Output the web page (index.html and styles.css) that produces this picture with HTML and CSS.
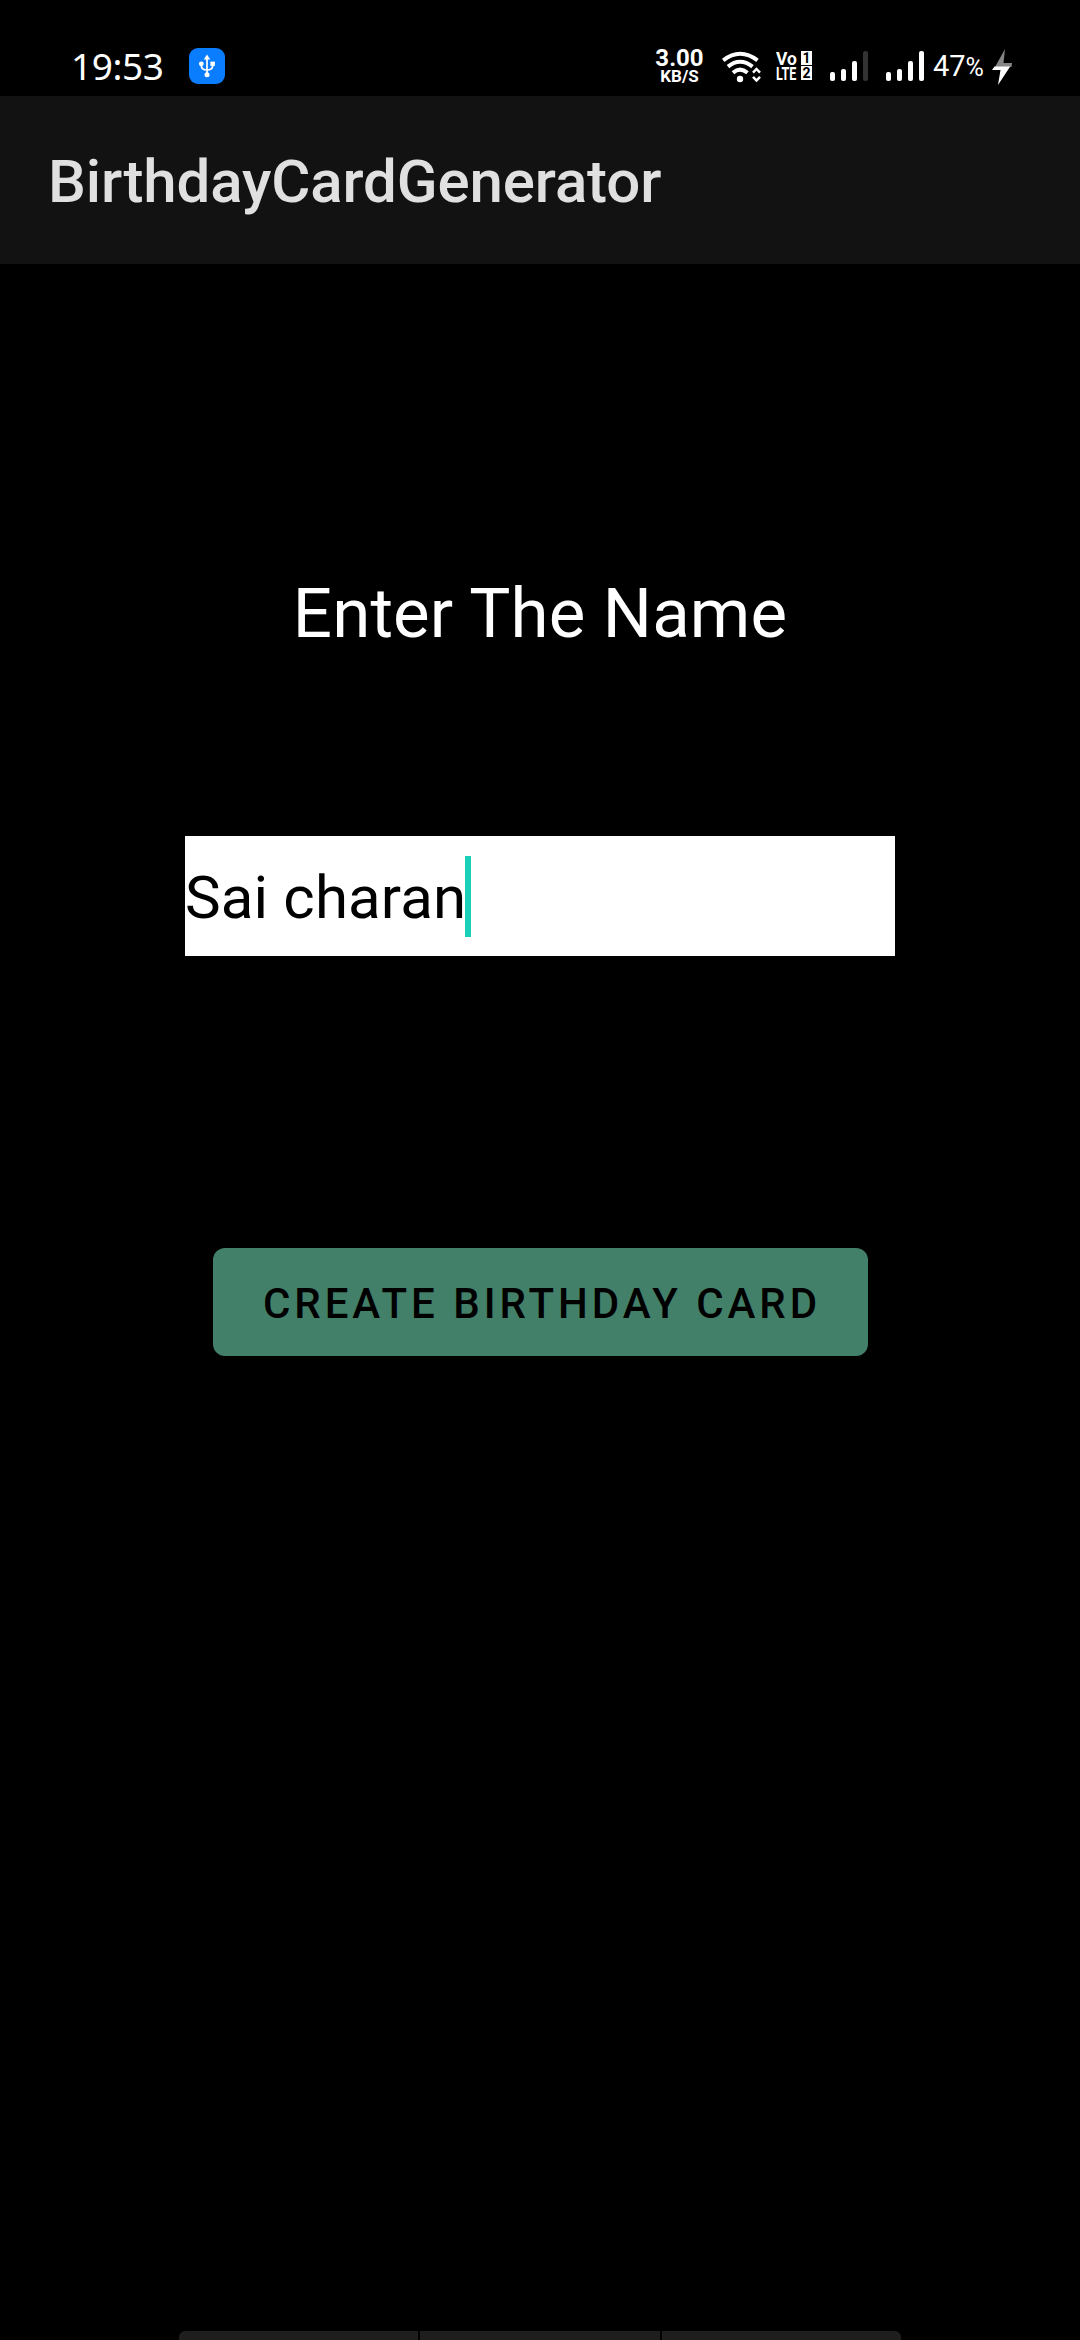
FILE: index.html
```html
<!DOCTYPE html>
<html lang="en">
<head>
<meta charset="utf-8">
<title>BirthdayCardGenerator</title>
<link rel="stylesheet" href="styles.css">
</head>
<body>
<div class="screen">
  <header class="status">
    <span class="clock">19:53</span>
    <svg class="usb" width="36" height="36" viewBox="0 0 36 36">
      <rect width="36" height="36" rx="9" fill="#0a7dff"/>
      <g fill="none" stroke="#fff" stroke-width="1.7"><path d="M18 10v17M12.3 16v1.5c0 3.2 2.5 4.5 5.700 4.500s5.700-1.300 5.700-4.500V16"/></g>
      <g fill="#fff"><path d="M18 6.500l3.200 5h-6.400z"/><circle cx="12.300" cy="15.800" r="2.400"/><path d="M21.400 13.600h4.500v4.300h-4.500z"/><circle cx="18" cy="26.700" r="2.500"/></g>
    </svg>
    <div class="speed"><span class="rate">3.00</span><span class="unit">KB/S</span></div>
    <svg class="wifi" width="40" height="34" viewBox="0 0 40 34">
      <g fill="none" stroke="#fff" stroke-width="4">
        <path d="M1.200 10.300Q18 -2.800 35.500 10.300"/><path d="M6 16.600Q18 6.900 30.500 16.600"/><path d="M11 22.700Q18 16.600 25.500 22.700"/>
      </g>
      <circle cx="18" cy="29" r="3.200" fill="#fff"/>
      <path d="M31 22.700l3.500-3.700 3.500 3.700M31 26.800l3.500 3.700 3.500-3.700" fill="none" stroke="#fff" stroke-width="2.500"/>
    </svg>
    <div class="volte">
      <span class="vo">Vo</span><span class="sim">1</span>
      <span class="lte">LTE</span><span class="sim">2</span>
    </div>
    <div class="signal"><i class="b1"></i><i class="b2"></i><i class="b3"></i><i class="b4 off"></i></div>
    <div class="signal second"><i class="b1"></i><i class="b2"></i><i class="b3"></i><i class="b4"></i></div>
    <span class="battery">47<span class="pct">%</span></span>
    <svg class="bolt" width="20" height="36" viewBox="0 0 20 36">
      <path d="M13 0L3 18H19.500L20 14H11.500z" fill="#858585"/>
      <path d="M2.500 17.500L0 21H8.500L6 36L18.200 17.500z" fill="#fff"/>
    </svg>
  </header>
  <div class="appbar"><h1>BirthdayCardGenerator</h1></div>
  <main>
    <h2>Enter The Name</h2>
    <div class="field"><span class="value">Sai charan</span><i class="caret"></i></div>
    <button class="create">CREATE BIRTHDAY CARD</button>
  </main>
  <footer class="keys"><i></i><i></i><i></i></footer>
</div>
</body>
</html>
```
FILE: styles.css
```css
* { box-sizing: border-box; margin: 0; padding: 0; }
body { background: #000; color: #fff; font-family: Roboto, sans-serif; }
.screen { width: 1080px; height: 2340px; display: flex; flex-direction: column; overflow: hidden; }
svg { display: block; flex: none; }

.status { height: 96px; flex: none; display: flex; align-items: flex-start; padding: 48px 0 0 71px; }
.clock { width: 118px; font: 400 37px/40px "Noto Sans", sans-serif; letter-spacing: -0.4px; margin-top: -2px; }
.speed { width: 49px; margin-left: 430px; display: flex; flex-direction: column; align-items: center; font-weight: 700; }
.rate { font-size: 24px; line-height: 20px; }
.unit { font-size: 17px; line-height: 16px; }
.wifi { margin: 2px 0 0 18px; }
.volte { margin: 3px 0 0 14px; width: 36px; display: grid; grid-template-columns: 23px 11px; gap: 1px 2px; font: 700 19px/15px Roboto, sans-serif; }
.vo, .lte { width: max-content; height: 14px; transform-origin: left; white-space: nowrap; }
.vo { transform: scaleX(.92); }
.lte { transform: scaleX(.66); margin-right: -12px; }
.sim { height: 14px; background: #fff; color: #000; font-size: 14px; line-height: 15px; text-align: center; }
.signal { height: 30px; display: flex; align-items: flex-end; gap: 6px; margin: 3px 0 0 18px; }
.signal i { width: 5px; border-radius: 2px; background: #fff; }
.signal .b1 { height: 9px; }
.signal .b2 { height: 12px; }
.signal .b3 { height: 20px; }
.signal .b4 { height: 30px; }
.signal .off { background: #333; }
.battery { width: 59px; margin: 2px 0 0 9px; font-size: 29px; line-height: 32px; letter-spacing: 0; white-space: nowrap; }
.pct { font-size: 25px; }
.bolt { margin-top: 1px; }

.appbar { height: 168px; flex: none; background: #121212; display: flex; align-items: center; padding: 4px 0 0 48px; }
.appbar h1 { font-size: 60px; line-height: 70px; font-weight: 500; letter-spacing: -0.12px; color: #e0e0e0; }

main { flex: 1; display: flex; flex-direction: column; align-items: center; padding-top: 309px; }
h2 { font-size: 69px; line-height: 82px; font-weight: 400; letter-spacing: 0.15px; }
.field { width: 710px; height: 120px; margin-top: 181px; background: #fff; color: #000; display: flex; align-items: center; font-size: 60px; line-height: 70px; }
.value { width: 280px; padding-top: 4px; letter-spacing: 0.15px; white-space: nowrap; }
.caret { width: 6px; height: 81px; background: #1ad0b8; }
.create { width: 655px; height: 108px; margin-top: 292px; padding: 3px 0 0 4px; border: 0; border-radius: 12px; background: #43806a; color: #000; font: 500 42px/50px Roboto, sans-serif; letter-spacing: 3.95px; }

.keys { height: 9px; flex: none; display: flex; gap: 2px; width: 722px; margin: 0 auto; overflow: hidden; border-radius: 6px 6px 0 0; }
.keys i { flex: 1; background: #1e1e1e; }
```
